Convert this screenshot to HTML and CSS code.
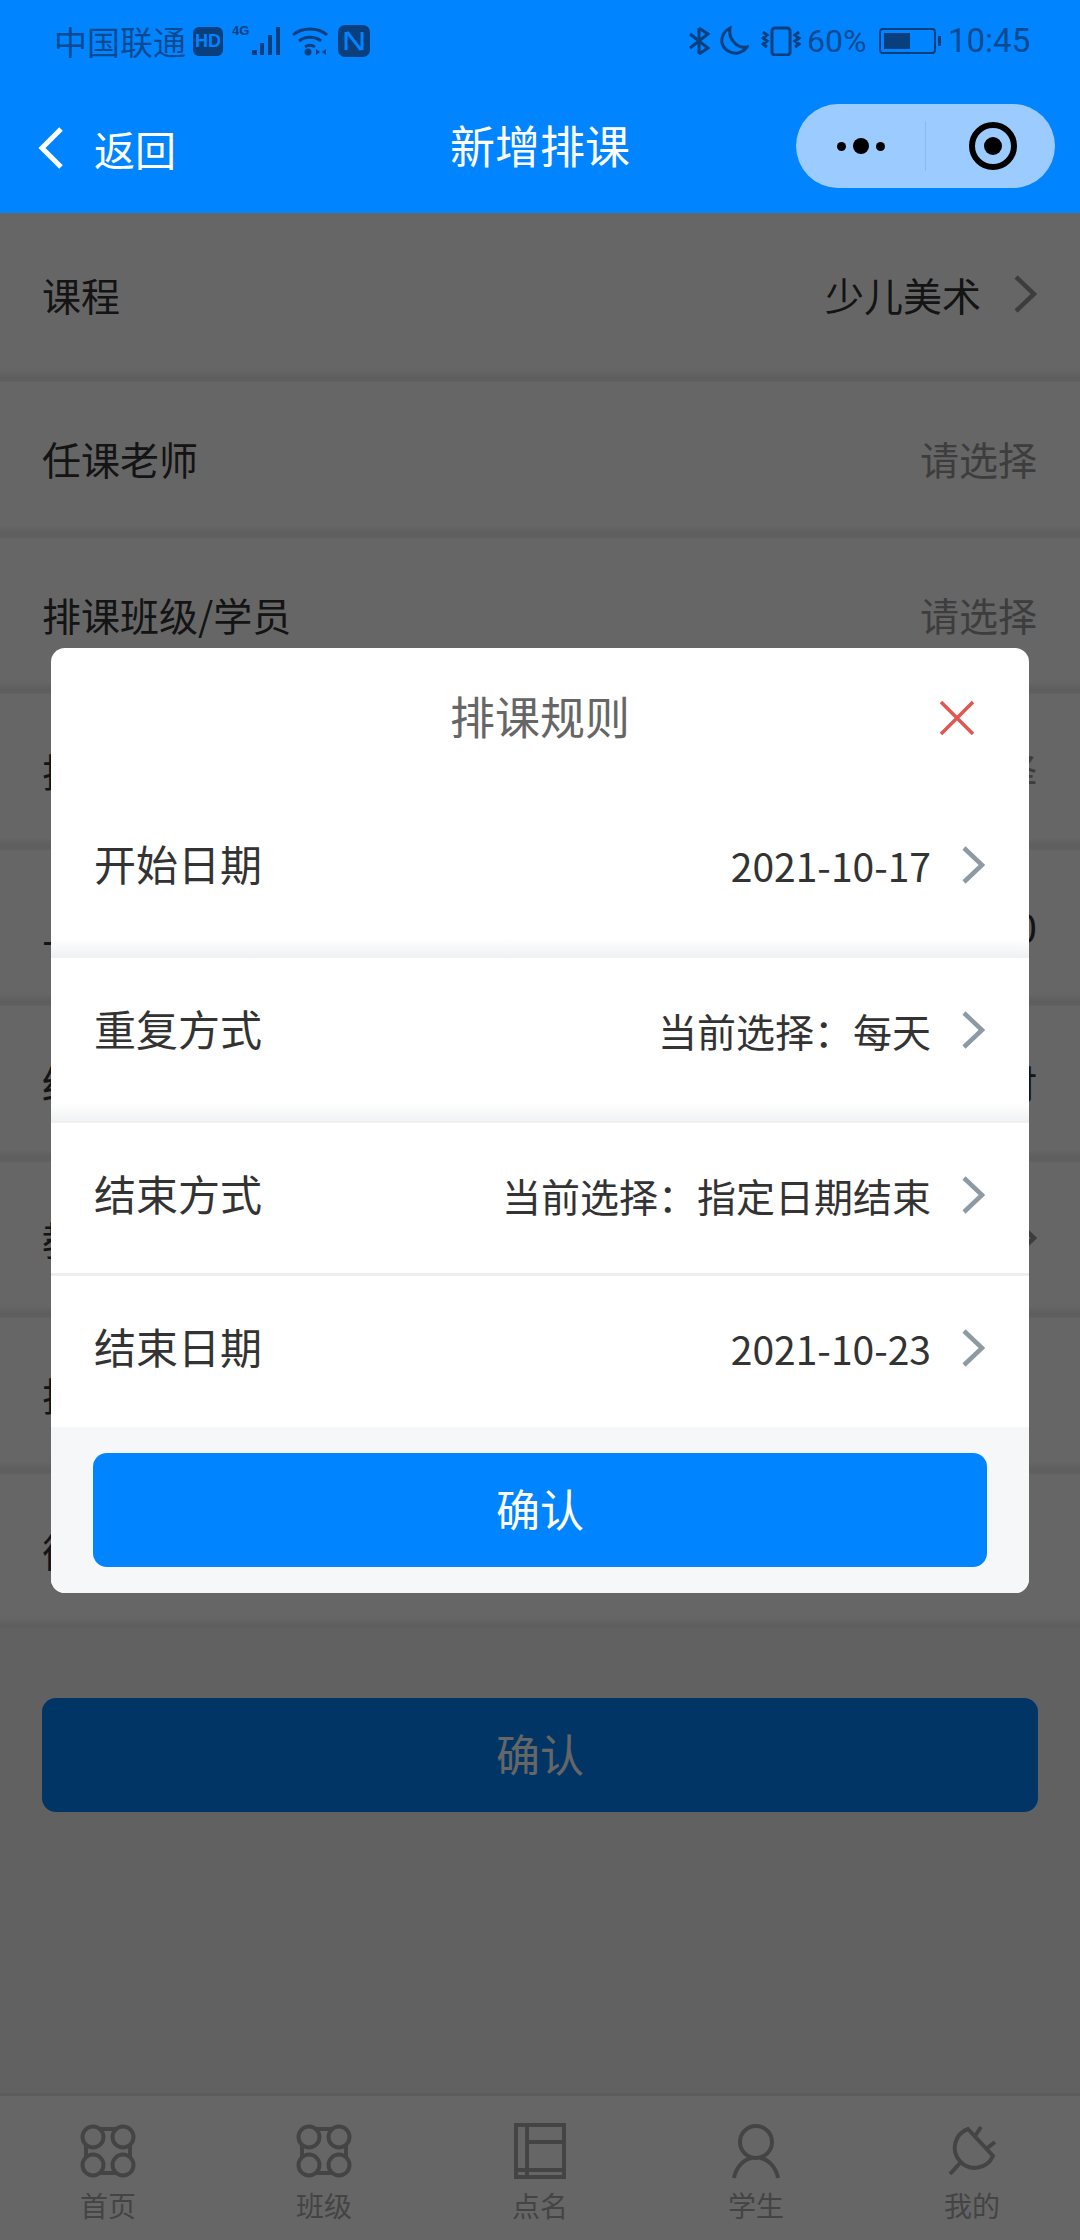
FILE: index.html
```html
<!DOCTYPE html>
<html lang="zh-CN">
<head>
    <meta charset="UTF-8">
    <meta name="viewport" content="width=device-width, initial-scale=1.0">
    <title>新增排课</title>
    <link rel="stylesheet" href="styles.css">
</head>
<body>
    <div class="app">
        <header class="top">
            <div class="status-bar">
                <div class="status-left">
                    <span class="carrier">中国联通</span>
                    <span class="hd">HD</span>
                    <span class="net">4G</span>
                    <svg class="signal" width="32" height="30" viewBox="0 0 32 30"><path d="M2 24h5v5H2zM10 17h4v12h-4zM18 9h4v20h-4zM26 1h4v28h-4z"/></svg>
                    <svg class="wifi" width="38" height="30" viewBox="0 0 38 30" fill="none"><path d="M2 9C11 1 27 1 36 9M8 15c6-5 16-5 22 0M14 21c3-2 7-2 10 0"/><circle class="fill" cx="17" cy="26" r="3.5"/><path class="fill" d="M25 23l4 3-4 3zM35 23l-4 3 4 3z"/></svg>
                    <svg class="nfc" width="32" height="32" viewBox="0 0 32 32"><rect class="fill" width="32" height="32" rx="7"/><path d="M8 7v18M24 7v18M9 7l14 18" fill="none" stroke="#0084ff" stroke-width="3"/></svg>
                </div>
                <div class="status-right">
                    <svg class="bt" width="22" height="30" viewBox="0 0 22 30" fill="none"><path d="M11 2v26M2 8l18 14-9 6M2 22L20 8l-9-6"/></svg>
                    <svg class="moon" width="30" height="30" viewBox="0 0 30 30" fill="none"><path d="M11 2C5 5 2 11 3 17c2 7 9 11 16 10 4-1 7-3 9-6-9 2-19-7-17-19z"/></svg>
                    <svg class="vibrate" width="40" height="30" viewBox="0 0 40 30" fill="none"><rect x="11" y="2" width="18" height="27" rx="3"/><path d="M2 6l4 3-4 3 4 3-4 3 4 3M38 6l-4 3 4 3-4 3 4 3-4 3"/></svg>
                    <span class="percent">60%</span>
                    <div class="battery"><div class="battery-fill"></div></div>
                    <span class="clock">10:45</span>
                </div>
            </div>
            <nav class="nav-bar">
                <div class="nav-back">
                    <svg width="26" height="44" viewBox="0 0 26 44" fill="none"><path d="M23 3L4 22l19 19" stroke="#fff" stroke-width="5"/></svg>
                    <span>返回</span>
                </div>
                <div class="nav-title">新增排课</div>
                <div class="capsule">
                    <div class="capsule-dots"><i></i><b></b><i></i></div>
                    <div class="capsule-line"></div>
                    <div class="capsule-target"><i></i></div>
                </div>
            </nav>
        </header>

        <main class="page">
            <div class="form-row form-row-first"><span>课程</span><div class="form-value">少儿美术<svg class="arrow" width="24" height="40" viewBox="0 0 24 40" fill="none"><path d="M3 3l18 17L3 37"/></svg></div></div>
            <div class="form-row"><span>任课老师</span><div class="form-value empty">请选择</div></div>
            <div class="form-row"><span>排课班级/学员</span><div class="form-value empty">请选择</div></div>
            <div class="form-row"><span>排课模式</span><div class="form-value empty">请选择</div></div>
            <div class="form-row"><span>上课时间</span><div class="form-value">09:00-10:00</div></div>
            <div class="form-row"><span>结算课时</span><div class="form-value">1课时</div></div>
            <div class="form-row"><span>教室</span><div class="form-value"><svg class="arrow" width="24" height="40" viewBox="0 0 24 40" fill="none"><path d="M3 3l18 17L3 37"/></svg></div></div>
            <div class="form-row"><span>排课规则</span></div>
            <div class="form-row"><span>循环设置</span></div>
            <button class="main-btn page-btn">确认</button>
        </main>

        <footer class="tab-bar">
            <div class="tab">
                <svg width="56" height="56" viewBox="0 0 56 56" fill="none"><circle cx="13" cy="14" r="10.5"/><circle cx="43" cy="14" r="10.5"/><circle cx="13" cy="42" r="10.5"/><circle cx="43" cy="42" r="10.5"/><path d="M20 6h16M20 50h16M6 22v12M50 22v12"/></svg>
                <span>首页</span>
            </div>
            <div class="tab">
                <svg width="56" height="56" viewBox="0 0 56 56" fill="none"><circle cx="13" cy="14" r="10.5"/><circle cx="43" cy="14" r="10.5"/><circle cx="13" cy="42" r="10.5"/><circle cx="43" cy="42" r="10.5"/><path d="M20 6h16M20 50h16M6 22v12M50 22v12"/></svg>
                <span>班级</span>
            </div>
            <div class="tab">
                <svg width="56" height="56" viewBox="0 0 56 56" fill="none"><path d="M4 2h48v52H4zM15 2v52M15 19h37M4 47h48"/></svg>
                <span>点名</span>
            </div>
            <div class="tab">
                <svg width="56" height="56" viewBox="0 0 56 56" fill="none"><circle cx="28" cy="19" r="16"/><path d="M6 55c2-11 10-19 18-20M50 55c-2-11-10-19-18-20"/></svg>
                <span>学生</span>
            </div>
            <div class="tab">
                <svg width="56" height="56" viewBox="0 0 56 56" fill="none"><path d="M24 6l25 27A20 20 0 1 1 24 6zM31 13l6-9M42 26l9-7M17 39L6 51"/></svg>
                <span>我的</span>
            </div>
        </footer>

        <div class="mask">
            <div class="dialog">
                <div class="dialog-head">
                    <span class="dialog-title">排课规则</span>
                    <svg class="dialog-close" width="36" height="36" viewBox="0 0 36 36" fill="none"><path d="M2 2l32 32M34 2L2 34"/></svg>
                </div>
                <div class="rule-row rule-row-tall"><span>开始日期</span><div class="rule-value">2021-10-17<svg class="arrow" width="24" height="40" viewBox="0 0 24 40" fill="none"><path d="M3 3l18 17L3 37"/></svg></div></div>
                <div class="rule-row rule-row-tall"><span>重复方式</span><div class="rule-value">当前选择：每天<svg class="arrow" width="24" height="40" viewBox="0 0 24 40" fill="none"><path d="M3 3l18 17L3 37"/></svg></div></div>
                <div class="rule-row rule-row-line"><span>结束方式</span><div class="rule-value">当前选择：指定日期结束<svg class="arrow" width="24" height="40" viewBox="0 0 24 40" fill="none"><path d="M3 3l18 17L3 37"/></svg></div></div>
                <div class="rule-row"><span>结束日期</span><div class="rule-value">2021-10-23<svg class="arrow" width="24" height="40" viewBox="0 0 24 40" fill="none"><path d="M3 3l18 17L3 37"/></svg></div></div>
                <div class="dialog-foot"><button class="main-btn">确认</button></div>
            </div>
        </div>
    </div>
</body>
</html>
```

FILE: styles.css
```css
* { margin: 0; padding: 0; box-sizing: border-box; }
body { font-family: "Noto Sans CJK SC", "Noto Sans", sans-serif; background: #f3f3f5; color: #333; overflow: hidden; }
.app { width: 1080px; height: 2240px; position: relative; display: flex; flex-direction: column; overflow: hidden; }

/* status bar + nav stay above the mask */
.top { height: 213px; background: #0084ff; color: #fff; }
.status-bar { height: 82px; padding: 0 50px 0 54px; display: flex; justify-content: space-between; align-items: center; color: #0b4a90; }
.status-left, .status-right { display: flex; align-items: center; }
.status-bar svg { stroke: #0a3f7e; stroke-width: 3; fill: #0a3f7e; }
.status-bar svg[fill="none"] { fill: none; }
.status-bar .fill { fill: #0a3f7e; stroke: none; }
.carrier { font-size: 33px; line-height: 40px; width: 131px; white-space: nowrap; }
.hd { width: 30px; height: 29px; margin-left: 8px; border-radius: 6px; background: #0a3f7e; color: #0084ff; font: bold 18px/29px "Liberation Sans", sans-serif; text-align: center; }
.net { width: 18px; margin: -20px 0 0 9px; font: bold 13px/14px "Liberation Sans", sans-serif; color: #0a3f7e; }
.signal { stroke: none !important; }
.wifi { margin-left: 9px; }
.nfc { margin-left: 9px; stroke: none !important; }
.bt { margin-right: 9px; }
.moon { margin-right: 12px; }
.percent { font: 32px/40px Roboto, sans-serif; margin-left: 6px; width: 62px; white-space: nowrap; }
.battery { width: 57px; height: 26px; margin-left: 10px; border: 2px solid #0a3f7e; border-radius: 4px; padding: 3px; position: relative; }
.battery::after { content: ""; position: absolute; right: -7px; top: 6px; width: 3px; height: 10px; background: #0a3f7e; }
.battery-fill { width: 26px; height: 16px; background: #0a3f7e; }
.clock { font: 33px/40px Roboto, sans-serif; margin-left: 12px; width: 82px; white-space: nowrap; }

.nav-bar { height: 131px; padding: 0 25px; display: grid; grid-template-columns: minmax(0, 1fr) auto minmax(0, 1fr); align-items: center; }
.nav-back { display: flex; align-items: center; padding-left: 13px; font-size: 41px; line-height: 56px; }
.nav-back span { margin-left: 30px; }
.nav-title { font-size: 45px; line-height: 60px; margin-top: -5px; }
.capsule { justify-self: end; width: 259px; height: 84px; margin-top: -3px; border-radius: 42px; background: #9ccbff; display: flex; align-items: center; }
.capsule-dots { width: 129px; display: flex; justify-content: center; align-items: center; gap: 7px; padding-left: 1px; }
.capsule-dots i { width: 9px; height: 9px; border-radius: 50%; background: #000; }
.capsule-dots b { width: 16px; height: 16px; border-radius: 50%; background: #000; }
.capsule-line { width: 1px; height: 50px; background: #8ab9ee; }
.capsule-target { width: 48px; height: 48px; margin-left: 43px; border: 6px solid #000; border-radius: 50%; display: flex; align-items: center; justify-content: center; }
.capsule-target i { width: 18px; height: 18px; border-radius: 50%; background: #000; }

/* form behind the mask */
.page { flex: 1; display: flex; flex-direction: column; }
.form-row { height: 156px; flex: none; padding: 0 43px 4px 42px; background: linear-gradient(to bottom, #fff calc(100% - 12px), #e9ebeb calc(100% - 4px), #f3f4f4 100%); display: flex; justify-content: space-between; align-items: center; font-size: 39px; line-height: 56px; }
.form-row-first { height: 169px; padding-bottom: 7px; }
.form-value { display: flex; align-items: center; font-size: 39px; }
.form-value.empty { color: #999; }
.arrow { stroke: #8e9aa3; stroke-width: 4.5; margin-left: 30px; flex: none; }
.form-row .arrow { stroke: #999; margin-left: 32px; }
.main-btn { display: block; height: 114px; padding-bottom: 5px; border: none; border-radius: 14px; background: #0084ff; color: #fff; font-family: inherit; font-size: 44px; }
.page-btn { width: 996px; margin: 68px 0 0 42px; flex: none; }

.tab-bar { height: 147px; background: #fff; border-top: 3px solid #e4e6e6; display: flex; padding-top: 27px; }
.tab { flex: 1; display: flex; flex-direction: column; align-items: center; color: #aaa; font-size: 28px; line-height: 40px; }
.tab svg { stroke: #aaa; stroke-width: 4; flex: none; }
.tab span { margin-top: 6px; }

/* overlay */
.mask { position: absolute; left: 0; right: 0; top: 213px; bottom: 0; background: rgba(0, 0, 0, 0.6); padding: 435px 51px 0; }
.dialog { height: 945px; background: #fff; border-radius: 14px; overflow: hidden; display: flex; flex-direction: column; }
.dialog-head { height: 145px; flex: none; padding: 40px 50px 0; display: flex; justify-content: center; position: relative; color: #666; }
.dialog-title { font-size: 45px; line-height: 56px; }
.dialog-close { position: absolute; right: 54px; top: 52px; stroke: #e0574f; stroke-width: 3.5; }
.rule-row { height: 151px; flex: none; padding: 42px 44px 0 43px; display: flex; justify-content: space-between; align-items: flex-start; font-size: 42px; line-height: 56px; color: #333; }
.rule-row-tall { height: 165px; background: linear-gradient(to bottom, #fff calc(100% - 20px), #f3f4f5 calc(100% - 5px), #eef0f1 100%); }
.rule-row-line { height: 153px; border-bottom: 3px solid #eceef0; }
.rule-value { display: flex; align-items: center; font-size: 39px; height: 56px; margin-top: 2px; }
.dialog-foot { flex: 1; background: #f6f7f8; padding: 26px 42px 0; }
.dialog-foot .main-btn { width: 100%; }
```
